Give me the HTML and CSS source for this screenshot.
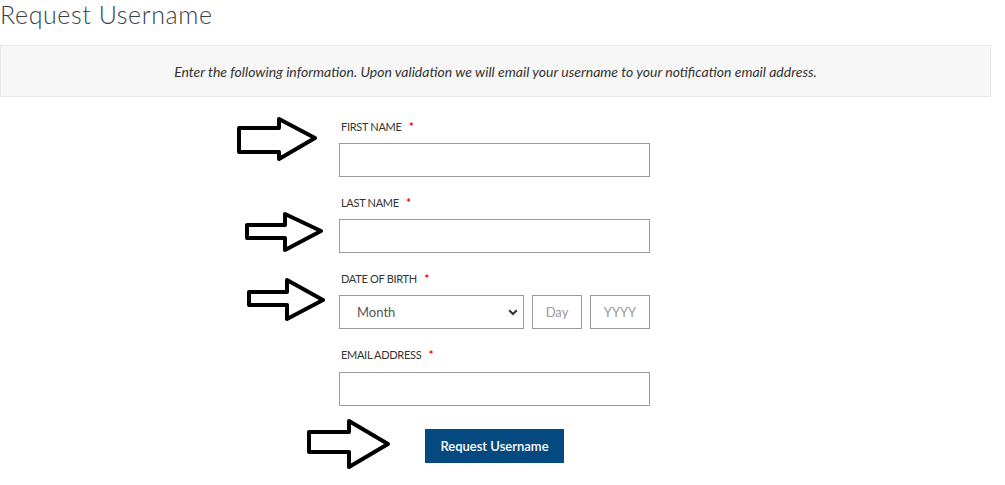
FILE: index.html
```html
<!DOCTYPE html>
<html lang="en">
<head>
<meta charset="utf-8">
<title>Request Username</title>
<link rel="stylesheet" href="styles.css">
</head>
<body>
<div class="page">
  <h1 class="title">Request Username</h1>
  <div class="banner">Enter the following information. Upon validation we will email your username to your notification email address.</div>
  <form class="form">
    <div class="group">
      <label class="label">FIRST NAME <span class="req">*</span></label>
      <input class="input" type="text">
    </div>
    <div class="group">
      <label class="label">LAST NAME <span class="req">*</span></label>
      <input class="input" type="text">
    </div>
    <div class="group">
      <label class="label">DATE OF BIRTH <span class="req">*</span></label>
      <div class="dob">
        <div class="select-wrap">
          <select class="select"><option>Month</option></select>
          <svg class="chev" width="10" height="7" viewBox="0 0 10 7"><path d="M1.2 1.2 L5 5 L8.8 1.2" fill="none" stroke="#333" stroke-width="2"/></svg>
        </div>
        <input class="input day" type="text" placeholder="Day">
        <input class="input year" type="text" placeholder="YYYY">
      </div>
    </div>
    <div class="group last">
      <label class="label">EMAIL ADDRESS <span class="req">*</span></label>
      <input class="input" type="text">
    </div>
    <div class="actions">
      <button class="btn" type="button">Request Username</button>
    </div>
  </form>

  <svg class="arrow a1" width="86" height="48" viewBox="0 0 86 48"><polygon points="4,13 44,13 44,4 80,23 44,44 44,37 4,37" /></svg>
  <svg class="arrow a2" width="84" height="45" viewBox="0 0 84 45"><polygon points="4,15 42,15 42,4 78,21 42,40 42,28 4,28" /></svg>
  <svg class="arrow a3" width="84" height="48" viewBox="0 0 84 48"><polygon points="4,16 42,16 42,4 78,24 42,43 42,29 4,29" /></svg>
  <svg class="arrow a4" width="88" height="55" viewBox="0 0 88 55"><polygon points="4,15 44,15 44,4 83,27 44,50 44,35 4,35" /></svg>
</div>
</body>
</html>
```
FILE: styles.css
```css
html, body {
  margin: 0;
  padding: 0;
  background: #fff;
}
body {
  font-family: Lato, "Open Sans", Arial, sans-serif;
  color: #333;
}
.page {
  position: relative;
  width: 991px;
  height: 485px;
}
.title {
  margin: 0 0 17px 0;
  font-family: Lato, sans-serif;
  font-weight: 300;
  font-size: 25px;
  letter-spacing: 0.6px;
  line-height: 28px;
  color: #3a3f44;
}
.banner {
  box-sizing: border-box;
  height: 52px;
  border: 1px solid #e8e8e8;
  background: #f7f7f7;
  display: flex;
  align-items: center;
  justify-content: center;
  font-style: italic;
  font-size: 14px;
  color: #333;
}
.form {
  width: 311px;
  margin: 22px 0 0 339px;
  display: flex;
  flex-direction: column;
}
.group {
  display: flex;
  flex-direction: column;
  margin-bottom: 18px;
}
.group.last .label {
  margin-bottom: 9px;
}
.label {
  display: block;
  height: 16px;
  line-height: 16px;
  font-size: 11px;
  letter-spacing: -0.3px;
  padding-left: 2px;
  margin-bottom: 8px;
  color: #333;
}
.req {
  color: #e00000;
  margin-left: 5px;
  font-weight: 700;
}
.input {
  box-sizing: border-box;
  width: 311px;
  height: 34px;
  border: 1px solid #9a9a9a;
  border-radius: 0;
  background: #fff;
  font-family: Lato, sans-serif;
  font-size: 13px;
  color: #555;
  padding: 0 8px;
  outline: none;
}
.input::placeholder {
  color: #9a9a9a;
}
.dob {
  display: flex;
  gap: 8px;
}
.select-wrap {
  position: relative;
  width: 185px;
  height: 34px;
}
.select {
  box-sizing: border-box;
  width: 185px;
  height: 34px;
  border: 1px solid #9a9a9a;
  border-radius: 0;
  background: #fff;
  appearance: none;
  -webkit-appearance: none;
  font-family: Lato, sans-serif;
  font-size: 13px;
  color: #555;
  padding: 0 0 0 17px;
  outline: none;
}
.chev {
  position: absolute;
  right: 6px;
  top: 14px;
}
.input.day {
  width: 50px;
  padding: 0;
  text-align: center;
}
.input.year {
  width: 60px;
  padding: 0;
  text-align: center;
}
.actions {
  display: flex;
  justify-content: center;
  margin-top: 5px;
}
.btn {
  width: 139px;
  height: 34px;
  border: none;
  border-radius: 0;
  background: #044a81;
  color: #fff;
  font-family: Lato, sans-serif;
  font-size: 13px;
  font-weight: 600;
  cursor: pointer;
}
.arrow {
  position: absolute;
}
.arrow polygon {
  fill: #fff;
  stroke: #000;
  stroke-width: 4;
  stroke-linejoin: round;
}
.a1 { left: 235px; top: 115px; }
.a2 { left: 243px; top: 210px; }
.a3 { left: 245px; top: 276px; }
.a4 { left: 305px; top: 417px; }
```
